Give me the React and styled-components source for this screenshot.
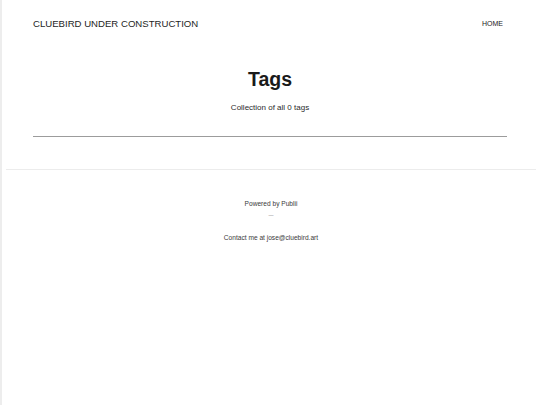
import styled, { createGlobalStyle } from "styled-components";

const GlobalStyle = createGlobalStyle`
    html, body {
        margin: 0;
        padding: 0;
        background: #fff;
        font-family: "Liberation Sans", Arial, sans-serif;
    }
`

const App = () => {
    return (
        <Page>
            <GlobalStyle />
            <Header>
                <Brand>CLUEBIRD UNDER CONSTRUCTION</Brand>
                <Nav>
                    <NavLink href="#">HOME</NavLink>
                </Nav>
            </Header>
            <Main>
                <Title>Tags</Title>
                <Subtitle>Collection of all 0 tags</Subtitle>
                <Divider />
            </Main>
            <Footer>
                <FooterLine>Powered by Publii</FooterLine>
                <Dash>—</Dash>
                <FooterLine $gap={13}>Contact me at jose@cluebird.art</FooterLine>
            </Footer>
        </Page>
    );
}

export default App;

const Page = styled.div`
    min-height: 100vh;
    border-left: 2px solid #ededed;
    box-sizing: border-box;
`

const Header = styled.header`
    display: flex;
    justify-content: space-between;
    align-items: center;
    height: 46px;
    padding: 0 37px 0 31px;
`

const Brand = styled.div`
    font-size: 9.6px;
    color: #1e1e1e;
`

const Nav = styled.nav`
    display: flex;
    gap: 12px;
`

const NavLink = styled.a`
    font-size: 7px;
    color: #222;
    text-decoration: none;
`

const Main = styled.main`
    text-align: center;
    padding: 0 33px 0 31px;
`

const Title = styled.h1`
    margin: 21px 0 0;
    font-size: 19.5px;
    line-height: 24px;
    font-weight: 700;
    color: #1a1a1a;
`

const Subtitle = styled.p`
    margin: 11px 0 0;
    font-size: 8px;
    line-height: 12px;
    color: #2b2b2b;
`

const Divider = styled.hr`
    margin: 22px 0 0;
    border: 0;
    border-top: 1px solid #9c9c9c;
    height: 0;
`

const Footer = styled.footer`
    margin: 32px 4px 0;
    border-top: 1px solid #ececec;
    padding-top: 29px;
    text-align: center;
`

const FooterLine = styled.p`
    margin: ${props => props.$gap || 0}px 0 0;
    font-size: 6.6px;
    line-height: 10px;
    color: #3a3a3a;
`

const Dash = styled.div`
    margin-top: 1px;
    font-size: 5px;
    line-height: 10px;
    color: #888;
`
